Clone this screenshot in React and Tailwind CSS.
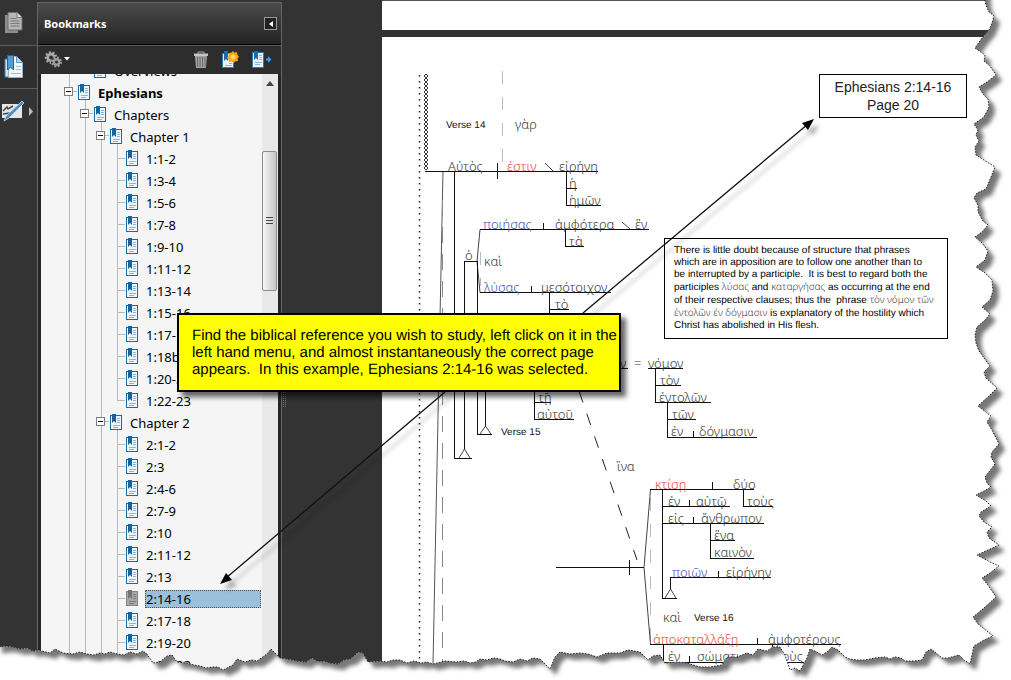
// src/App.jsx
import React, { useState } from 'react';

// Bookmark tree rows. `guides` describes the connector cells left of the icon.
const bookmarks = [
  { label: 'Overviews', guides: ['line', 'elbow'] },
  { label: 'Ephesians', guides: ['box'], bold: true, parent: true },
  { label: 'Chapters', guides: ['line', 'box'], parent: true },
  { label: 'Chapter 1', guides: ['line', 'line', 'box'], parent: true },
  ...['1:1-2', '1:3-4', '1:5-6', '1:7-8', '1:9-10', '1:11-12', '1:13-14', '1:15-16', '1:17-18a', '1:18b-19', '1:20-21'].map(
    (label) => ({ label, guides: ['line', 'line', 'line', 'tee'] })
  ),
  { label: '1:22-23', guides: ['line', 'line', 'line', 'elbow'] },
  { label: 'Chapter 2', guides: ['line', 'line', 'box'], parent: true },
  ...['2:1-2', '2:3', '2:4-6', '2:7-9', '2:10', '2:11-12', '2:13', '2:14-16', '2:17-18', '2:19-20', '2:21-22'].map(
    (label) => ({ label, guides: ['line', 'line', 'line', 'tee'] })
  ),
];

// [text, x, baseline, color]
const words = [
  ['γὰρ', 515, 129],
  ['Αὐτὸς', 448, 171],
  ['ἐστιν', 507, 171, 'red'],
  ['εἰρήνη', 559, 171],
  ['ἡ', 569, 188],
  ['ἡμῶν', 569, 205],
  ['ποιήσας', 483, 229, 'blue'],
  ['ἀμφότερα', 555, 229],
  ['ἓν', 635, 229],
  ['τὰ', 569, 246],
  ['ὁ', 465, 260],
  ['καὶ', 484, 266],
  ['λύσας', 484, 292, 'blue'],
  ['μεσότοιχον', 541, 292],
  ['τὸ', 555, 309],
  ['τῇ', 538, 402],
  ['αὐτοῦ', 537, 419],
  ['ν', 620, 368],
  ['=', 634, 368],
  ['νόμον', 648, 368],
  ['τὸν', 660, 385],
  ['ἐντολῶν', 659, 402],
  ['τῶν', 672, 419],
  ['ἐν', 671, 436],
  ['δόγμασιν', 699, 436],
  ['ἵνα', 617, 471],
  ['κτίσῃ', 655, 489, 'red'],
  ['δύο', 733, 489],
  ['ἐν', 668, 506],
  ['αὐτῷ', 696, 506],
  ['τοὺς', 747, 506],
  ['εἰς', 668, 523],
  ['ἄνθρωπον', 701, 523],
  ['ἕνα', 714, 540],
  ['καινὸν', 714, 557],
  ['ποιῶν', 672, 577, 'blue'],
  ['εἰρήνην', 726, 577],
  ['καὶ', 663, 622],
  ['ἀποκαταλλάξῃ', 653, 644, 'red'],
  ['ἀμφοτέρους', 768, 644],
  ['ἐν', 668, 661],
  ['σώματι', 697, 661],
  ['τοὺς', 776, 661],
];

const verses = [
  ['Verse 14', 446, 128],
  ['Verse 15', 501, 435],
  ['Verse 16', 694, 621],
];

const wordFill = { red: 'fill-[#ee4a40]', blue: 'fill-[#3f57b8]' };

const tornPoints =
  '985,0 986,5 989,12 994,16 992,23 989,30 982,38 975,48 985,55 984,61 990,66 996,75 987,82 979,87 983,94 988,99 989,107 984,117 974,124 978,130 976,135 979,141 975,147 976,155 987,162 995,167 991,177 986,189 977,193 974,198 978,205 978,212 983,221 988,225 982,232 975,237 982,243 988,251 985,260 976,267 985,273 992,280 993,291 990,300 982,307 990,314 985,320 977,327 975,335 976,343 979,351 984,358 990,366 984,372 986,378 997,388 990,395 978,406 991,416 987,422 992,430 999,444 992,452 991,457 995,464 985,477 987,483 991,487 984,491 976,495 986,501 991,506 981,512 979,516 984,522 992,527 987,532 989,538 999,545 988,550 977,555 990,562 999,566 990,573 982,578 988,585 996,597 984,608 973,617 978,624 993,636 984,640 974,646 972,655 970,664 964,660 959,655 948,658 942,658 935,652 931,649 926,652 922,660 914,661 905,661 901,658 895,657 890,659 885,657 875,658 865,660 857,660 850,659 845,657 838,650 832,647 827,652 822,655 817,652 810,649 807,658 800,671 795,668 790,670 785,655 780,647 773,647 767,651 758,649 753,655 747,653 737,657 727,657 722,665 710,667 700,667 687,663 677,662 665,663 660,655 653,656 648,660 640,652 628,650 620,653 607,653 597,657 588,654 580,653 570,654 560,652 555,657 550,669 540,659 533,658 527,661 520,659 513,662 505,661 500,659 493,658 487,660 480,659 476,662 470,663 464,661 457,662 445,661 433,664 427,662 421,663 414,661 407,663 400,660 393,660 387,662 380,661 368,662 363,653 358,652 354,656 350,659 344,660 338,664 330,663 324,661 317,661 312,658 306,662 297,661 287,659 280,658 275,653 271,649 267,654 257,661 251,660 245,662 237,659 233,665 223,670 218,667 213,667 206,668 200,666 194,665 187,663 177,662 172,655 167,656 160,662 153,663 147,654 143,651 137,654 130,652 124,655 117,654 110,652 105,654 100,653 94,655 87,654 80,652 73,654 63,653 55,649 50,653 42,651 38,650 33,651 27,648 20,649 13,647 6,646 0,647';

const GuideCell = ({ kind }) => {
  if (kind === 'box') {
    return (
      <button type="button" aria-label="Collapse" className="w-4 h-[22px] shrink-0">
        <svg className="block" width="16" height="22" shapeRendering="crispEdges">
          <path d="M8 0h1v22h-1z M12 9h4v1h-4z" fill="#b9b9b9" />
          <rect x="3.500" y="5.500" width="8" height="8" fill="#fff" stroke="#7d7d7d" />
          <path d="M5 9h5v1h-5z" fill="#111" />
        </svg>
      </button>
    );
  }
  const paths = {
    line: 'M8 0h1v22h-1z',
    tee: 'M8 0h1v22h-1z M9 10h8v1h-8z',
    elbow: 'M8 0h1v11h-1z M9 10h8v1h-8z',
  };
  return (
    <svg className="block shrink-0" width="16" height="22" shapeRendering="crispEdges">
      <path d={paths[kind]} fill="#b9b9b9" />
    </svg>
  );
};

const BookmarkIcon = ({ selected, parent }) => (
  <svg className="block shrink-0 ml-px mr-[7px]" width="12" height="22">
    {parent && <path d="M7 18h1v4h-1z" fill="#b9b9b9" />}
    <rect x="0.500" y="3.500" width="11" height="14" fill={selected ? '#a9a9a9' : '#eef5fc'} stroke={selected ? '#858585' : '#1d6ba3'} />
    <path d="M7 6.500h3M7 8.500h3M7 10.500h3M3 13.500h7M3 15.500h5" stroke={selected ? '#7d7d7d' : '#8fb4dc'} />
    <path d="M2 2h4v9l-2-2-2 2z" fill={selected ? '#757575' : '#17639c'} />
  </svg>
);

const BookmarkTree = () => {
  const [selected, setSelected] = useState('2:14-16');

  return (
    <ul className="flex-1 -mt-[14px] pl-5">
      {bookmarks.map(({ label, guides, bold, parent }) => (
        <li key={label} className="flex items-center h-[22px]">
          {guides.map((kind, i) => (
            <GuideCell key={i} kind={kind} />
          ))}
          <BookmarkIcon selected={selected === label} parent={parent} />
          <a
            href="#bookmark"
            onClick={() => setSelected(label)}
            className={`flex-1 mr-px border border-dotted leading-4 whitespace-nowrap ${bold ? 'font-bold' : ''} ${
              selected === label ? 'bg-[#9ac0dc] border-[#5a4a3a]' : 'border-transparent'
            }`}
          >
            {label}
          </a>
        </li>
      ))}
    </ul>
  );
};

const PagesIcon = () => (
  <svg width="20" height="22" viewBox="0 0 20 22">
    <path d="M1 3h13v18H1z" fill="#8d8d8d" />
    <path d="M4 0.500h9l5 5V18H4z" fill="#b5b5b5" stroke="#6d6d6d" />
    <path d="M13 0.500v5h5" fill="#ddd" stroke="#777" />
    <path d="M6.500 6.500h6M6.500 9h9M6.500 11.500h9M6.500 14h9" stroke="#777" />
  </svg>
);

const BookmarksIcon = () => (
  <svg width="20" height="24" viewBox="0 0 20 24">
    <path d="M1 4h13v18H1z" fill="#cfe3f3" stroke="#3d82b5" />
    <path d="M4.500 1.500h8l6 6V22.500h-14z" fill="#f0f7fd" stroke="#8bb5d6" />
    <path d="M12.500 1.500v6h6" fill="#b8d4ea" stroke="#5a95c0" />
    <path d="M12 11.500h5M12 14.500h5M7 18.500h10" stroke="#9dbfdc" />
    <path d="M3.500 0.500h6V15l-3-3-3 3z" fill="#5b9bcb" stroke="#1f669c" />
  </svg>
);

const SignIcon = () => (
  <svg width="24" height="22" viewBox="0 0 24 22">
    <path d="M1 4h20v14H1z" fill="#e6e6e6" />
    <path d="M2 11l4-4 1 2 5-3M2 14l7-1" stroke="#444" strokeWidth="1.500" fill="none" />
    <path d="M21 1l2 2-15 15-5 3 2-5z" fill="#4f8fc0" stroke="#d6e7f5" strokeWidth="0.700" />
  </svg>
);

const GearIcon = () => (
  <svg width="27" height="18" viewBox="0 0 27 18">
    <circle cx="7" cy="6.500" r="5" fill="none" stroke="#a9a9a9" strokeWidth="2.500" strokeDasharray="2 1.490" />
    <circle cx="7" cy="6.500" r="3.300" fill="none" stroke="#a9a9a9" strokeWidth="2.800" />
    <circle cx="12.500" cy="11" r="5.500" fill="#2d2d2d" />
    <circle cx="12.500" cy="11" r="4.200" fill="none" stroke="#9c9c9c" strokeWidth="2.500" strokeDasharray="1.800 1.500" />
    <circle cx="12.500" cy="11" r="2.700" fill="none" stroke="#9c9c9c" strokeWidth="2.400" />
    <path d="M20 6h6l-3 3.500z" fill="#fff" />
  </svg>
);

const TrashIcon = () => (
  <svg width="16" height="18" viewBox="0 0 16 18">
    <path d="M5 2.500V1h6v1.500" fill="none" stroke="#aaa" />
    <path d="M1 2.500h14v2.500H1z" fill="#c4c4c4" />
    <path d="M2 5h12l-1 12H3z" fill="#a3a3a3" />
    <path d="M4.500 6v10M7 6v10M9.500 6v10M12 6v10" stroke="#686868" />
  </svg>
);

const NewBookmarkIcon = () => (
  <svg width="18" height="18" viewBox="0 0 18 18">
    <path d="M1.500 2.500h11v14h-11z" fill="#eaf4fc" stroke="#2a7ab3" />
    <path d="M3 0h4v10l-2-2-2 2z" fill="#1f6ca5" />
    <path d="M8 12.500h3M4 14.500h7" stroke="#8fb4dc" />
    <path d="M12 0l1.500 1.800L16 1l.2 2.500L18 5.500l-1.500 2 .5 2.500-2.500.2L12.500 12l-1.800-1.600L8 11l-.2-2.700L6 6.500l1.700-1.900L7.500 2l2.700-.2z" fill="#f7a51c" />
    <circle cx="12" cy="6" r="2.500" fill="#ffd55c" />
  </svg>
);

const FindBookmarkIcon = () => (
  <svg width="21" height="18" viewBox="0 0 21 18">
    <path d="M1.500 1.500h11v15h-11z" fill="#eaf4fc" stroke="#2a7ab3" />
    <path d="M3 0h4v9l-2-2-2 2z" fill="#1f6ca5" />
    <path d="M8 4.500h3M8 6.500h3M8 8.500h3M4 11.500h7M4 13.500h5" stroke="#8fb4dc" />
    <path d="M15 7.500h2V5l3.500 3.500L17 12V9.500h-2z" fill="#4b9ad6" />
  </svg>
);

const ToolRail = () => (
  <nav className="flex flex-col w-[37px] shrink-0 bg-[#333] pt-px">
    <button type="button" aria-label="Pages" className="h-[45px] pl-1 border-b border-[#5c5c5c]">
      <PagesIcon />
    </button>
    <button type="button" aria-label="Bookmarks" className="h-[43px] pl-1 border-b border-[#5c5c5c] bg-[#2f2f2f]">
      <BookmarksIcon />
    </button>
    <button type="button" aria-label="Signatures" className="flex items-center gap-1 h-11 pl-px">
      <SignIcon />
      <svg width="5" height="9">
        <path d="M0 0l4 4.500L0 9z" fill="#bbb" />
      </svg>
    </button>
  </nav>
);

const ScrollBar = () => (
  <div className="w-4 shrink-0 bg-[#e9e9e9]">
    <button type="button" aria-label="Scroll up" className="flex items-center justify-center w-full h-[18px]">
      <svg width="8" height="5">
        <path d="M4 0l4 5H0z" fill="#444" />
      </svg>
    </button>
    <div className="flex items-center justify-center mt-[59px] mr-px h-[140px] rounded-xs border border-[#8d8d8d] bg-linear-to-r from-[#f7f7f7] to-[#c6c6ca]">
      <svg width="7" height="8" shapeRendering="crispEdges">
        <path d="M0 0h7v1h-7zM0 3h7v1h-7zM0 6h7v1h-7z" fill="#444" />
      </svg>
    </div>
  </div>
);

const BookmarksPanel = () => (
  <aside className="flex flex-col w-[245px] shrink-0 mt-0.5 bg-[#252525] border-x border-t border-[#666]">
    <header className="flex items-center justify-between h-[42px] pl-1.5 pr-1 bg-linear-to-b from-[#4b4b4b] to-[#242424] border-b border-black">
      <h2 className="text-[11px] leading-4 font-bold text-white font-['Noto_Sans',sans-serif]">Bookmarks</h2>
      <button type="button" aria-label="Collapse panel" className="flex items-center justify-center w-[13px] h-[13px] border border-[#999] bg-[#222]">
        <svg width="4" height="6">
          <path d="M4 0v6L0 3z" fill="#fff" />
        </svg>
      </button>
    </header>
    <div className="flex items-center h-[29px] pl-1.5 pr-[9px] gap-3 border-t border-[#5c5c5c] bg-[#2d2d2d]">
      <button type="button" aria-label="Options" className="mr-auto"><GearIcon /></button>
      <button type="button" aria-label="Delete bookmark"><TrashIcon /></button>
      <button type="button" aria-label="New bookmark"><NewBookmarkIcon /></button>
      <button type="button" aria-label="Find current bookmark"><FindBookmarkIcon /></button>
    </div>
    <div className="flex flex-1 min-h-0 overflow-hidden mx-[3px] bg-[#f5f5f5] text-[13px] text-black font-['Noto_Sans',sans-serif]">
      <BookmarkTree />
      <ScrollBar />
    </div>
  </aside>
);

const SentenceDiagram = () => (
  <svg className="block" width="630" height="643" viewBox="382 37 630 643" fill="none" role="img" aria-label="Sentence diagram">
    {/* long guides on the left */}
    <path d="M419.500 75V664" stroke="#222" strokeWidth="1.500" strokeDasharray="1.500 4.500" />
    <path d="M443 171L433 664" stroke="#555" />
    <path d="M442.500 200V664" stroke="#888" strokeDasharray="16 11" />
    <path d="M502.500 71V164M480.500 252V286M650.500 498V644" stroke="#bbb" strokeDasharray="13 13" />
    <path d="M579 391L637 560" stroke="#222" strokeDasharray="12 12" />
    {Array.from({ length: 24 }, (_, i) => (
      <path key={i} d={`M426 ${74 + i * 4}l2 2l-2 2l-2-2z`} stroke="#333" />
    ))}

    {/* braces and pedestals */}
    <path
      d="M480 229.500L477 261.500L480 292.500M650.500 489.500L644 567.500L650.500 644.500M464.500 449L459 458M464.500 449L470 458M485.500 426L480 434M485.500 426L491 434M670.500 589L665 598M670.500 589L676 598M545 163l8 8M622 222l8 7"
      stroke="#444"
    />
    <g stroke="#111" shapeRendering="crispEdges">
      <path d="M425 171.500H598M497.500 163V179M454.500 171V458.500H472M566.500 171V205.500H601M566 188.500H577" />
      <path d="M480 229.500H649M543.500 223V229M565.500 229V246.500H584M464.500 449V261.500H477.500V434.500H492M485.500 390V426" />
      <path d="M480 292.500H611M531.500 286V292M549.500 292V330M549 309.500H569" />
      <path d="M534.500 390V419.500H574M534 402.500H551M610 368.500H628" />
      <path d="M648 368.500H683M655.500 368V402.500H711M655 385.500H681M667.500 402V437.500H757M667 419.500H696M693.500 431V437" />
      <path d="M556 567.500H644M629.500 560V575M650 489.500H754M712.500 482V489M662.500 489V598.500H677M662 506.500H730M743.500 489V506.500H773M689.500 500V506" />
      <path d="M662 523.500H764M693.500 517V523M710.500 523V558.500H754M710 540.500H735M670.500 589V577.500H771M718.500 571V577" />
      <path d="M650 644.500H841M757.500 638V644M663.500 644V662.500H750M689.500 656V662M772.500 644V662.500H804" />
    </g>

    <g className="font-['Noto_Sans',sans-serif] text-[13px] font-light">
      {words.map(([text, x, y, color]) => (
        <text key={`${x}-${y}`} x={x} y={y} className={wordFill[color] || 'fill-[#3a3a3a]'}>
          {text}
        </text>
      ))}
    </g>
    <g className="font-['Liberation_Sans',sans-serif] text-[10px] fill-[#111] [text-rendering:geometricPrecision]">
      {verses.map(([text, x, y]) => (
        <text key={text} x={x} y={y}>
          {text}
        </text>
      ))}
    </g>
  </svg>
);

const Greek = ({ children }) => (
  <span className="font-['Noto_Sans',sans-serif] font-light leading-none text-[#444]">{children}</span>
);

const DocumentView = () => (
  <main className="flex flex-col flex-1 min-w-0 font-['Liberation_Sans',sans-serif] text-[#222]">
    <div className="h-[30px] shrink-0 bg-white border-t border-[#555]" />
    <div className="relative flex-1 min-h-0 mt-[7px] bg-white overflow-hidden">
      <SentenceDiagram />
      <div className="absolute left-[437px] top-[37px] w-[148px] py-[3px] border border-black bg-white text-center text-[14px] leading-[18px]">
        <p>Ephesians 2:14-16</p>
        <p>Page 20</p>
      </div>
      <div className="absolute left-[282px] top-[201px] w-[284px] pl-[9px] py-[6px] border border-black bg-white text-[10px] leading-[12px] text-black whitespace-pre [text-rendering:geometricPrecision]">
        <p>There is little doubt because of structure that phrases</p>
        <p>which are in apposition are to follow one another than to</p>
        <p>be interrupted by a participle.{'  '}It is best to regard both the</p>
        <p>participles <Greek>λύσας</Greek> and <Greek>καταργήσας</Greek> as occurring at the end</p>
        <p>of their respective clauses; thus the{'  '}phrase <Greek>τὸν νόμον τῶν</Greek></p>
        <p><Greek>ἐντολῶν ἐν δόγμασιν</Greek> is explanatory of the hostility which</p>
        <p>Christ has abolished in His flesh.</p>
      </div>
    </div>
  </main>
);

const Callout = () => (
  <>
    <svg className="absolute left-0 top-0" width="1011" height="680" aria-hidden="true">
      <g className="drop-shadow-[5px_6px_2px_rgba(0,0,0,0.3)]">
        <path d="M583 313L808 124M445 392L226 578" stroke="#111" strokeWidth="1.300" />
        <path d="M814 119L808 130L802 123z M220 584L226 573L232 580z" fill="#000" />
      </g>
    </svg>
    <div className="absolute left-[177px] top-[313px] w-[444px] px-[13px] py-3 border-2 border-black bg-[#ff0] text-[15px] leading-[17px] text-black whitespace-pre shadow-[5px_5px_5px_rgba(0,0,0,0.6)] font-['Liberation_Sans',sans-serif] [text-rendering:geometricPrecision]">
      <p>Find the biblical reference you wish to study, left click on it in the</p>
      <p>left hand menu, and almost instantaneously the correct page</p>
      <p>appears.{'  '}In this example, Ephesians 2:14-16 was selected.</p>
    </div>
  </>
);

// Ripped paper border along the right and bottom sides
const TornEdge = () => (
  <svg className="absolute inset-0 w-full h-full pointer-events-none" viewBox="0 0 1011 680" preserveAspectRatio="none" aria-hidden="true">
    <defs>
      <clipPath id="outside">
        <path d={`M1011 0L${tornPoints}L0 680H1011z`} />
      </clipPath>
      <filter id="soft" x="-5%" y="-5%" width="110%" height="110%">
        <feGaussianBlur stdDeviation="2" />
      </filter>
    </defs>
    <g clipPath="url(#outside)">
      <rect width="1011" height="680" fill="#fff" />
      <path d={`M-20 -20H985L${tornPoints}L-4 647z`} fill="#777" filter="url(#soft)" transform="translate(6 6)" />
    </g>
    <polyline points={tornPoints} fill="none" stroke="#222" strokeDasharray="1.500 1.500" />
  </svg>
);

const App = () => {
  return (
    <div className="relative flex h-screen overflow-hidden bg-[#333]">
      <ToolRail />
      <BookmarksPanel />
      <div className="flex items-center w-[100px] shrink-0 pl-px pt-[120px]">
        <svg width="4" height="16">
          <path d="M0.500 0V16M2.500 0V16" stroke="#777" strokeDasharray="1 1" />
        </svg>
      </div>
      <DocumentView />
      <Callout />
      <TornEdge />
    </div>
  );
};

export default App;
